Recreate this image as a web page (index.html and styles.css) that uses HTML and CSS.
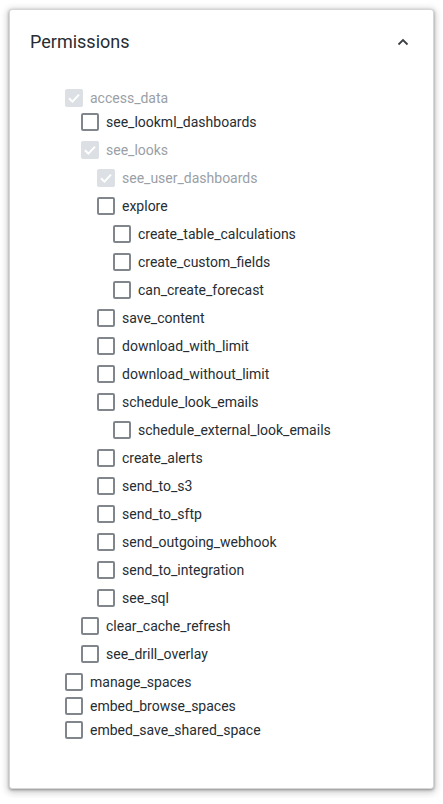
FILE: index.html
```html
<!DOCTYPE html>
<html lang="en">
<head>
    <meta charset="UTF-8">
    <meta name="viewport" content="width=device-width, initial-scale=1.0">
    <title>Permissions</title>
    <link rel="stylesheet" href="styles.css">
</head>
<body>
    <div class="card">
        <div class="card-header">
            <h2>Permissions</h2>
            <svg class="chevron" width="12" height="8" viewBox="0 0 12 8">
                <path d="M1.5 6.5 L6 2 L10.5 6.5" fill="none" stroke="#3c4043" stroke-width="1.8"/>
            </svg>
        </div>

        <ul class="perms">
            <li>
                <div class="perm disabled"><span class="box checked"><svg viewBox="0 0 18 18"><path d="M4 9.2 L7.4 12.6 L14 5.6" fill="none" stroke="#fff" stroke-width="2"/></svg></span>access_data</div>
                <ul>
                    <li><div class="perm"><span class="box"></span>see_lookml_dashboards</div></li>
                    <li>
                        <div class="perm disabled"><span class="box checked"><svg viewBox="0 0 18 18"><path d="M4 9.2 L7.4 12.6 L14 5.6" fill="none" stroke="#fff" stroke-width="2"/></svg></span>see_looks</div>
                        <ul>
                            <li><div class="perm disabled"><span class="box checked"><svg viewBox="0 0 18 18"><path d="M4 9.2 L7.4 12.6 L14 5.6" fill="none" stroke="#fff" stroke-width="2"/></svg></span>see_user_dashboards</div></li>
                            <li>
                                <div class="perm"><span class="box"></span>explore</div>
                                <ul>
                                    <li><div class="perm"><span class="box"></span>create_table_calculations</div></li>
                                    <li><div class="perm"><span class="box"></span>create_custom_fields</div></li>
                                    <li><div class="perm"><span class="box"></span>can_create_forecast</div></li>
                                </ul>
                            </li>
                            <li><div class="perm"><span class="box"></span>save_content</div></li>
                            <li><div class="perm"><span class="box"></span>download_with_limit</div></li>
                            <li><div class="perm"><span class="box"></span>download_without_limit</div></li>
                            <li>
                                <div class="perm"><span class="box"></span>schedule_look_emails</div>
                                <ul>
                                    <li><div class="perm"><span class="box"></span>schedule_external_look_emails</div></li>
                                </ul>
                            </li>
                            <li><div class="perm"><span class="box"></span>create_alerts</div></li>
                            <li><div class="perm"><span class="box"></span>send_to_s3</div></li>
                            <li><div class="perm"><span class="box"></span>send_to_sftp</div></li>
                            <li><div class="perm"><span class="box"></span>send_outgoing_webhook</div></li>
                            <li><div class="perm"><span class="box"></span>send_to_integration</div></li>
                            <li><div class="perm"><span class="box"></span>see_sql</div></li>
                        </ul>
                    </li>
                    <li><div class="perm"><span class="box"></span>clear_cache_refresh</div></li>
                    <li><div class="perm"><span class="box"></span>see_drill_overlay</div></li>
                </ul>
            </li>
            <li><div class="perm"><span class="box"></span>manage_spaces</div></li>
            <li><div class="perm"><span class="box"></span>embed_browse_spaces</div></li>
            <li><div class="perm"><span class="box"></span>embed_save_shared_space</div></li>
        </ul>
    </div>
</body>
</html>
```

FILE: styles.css
```css
body {
    font-family: Roboto, 'Liberation Sans', sans-serif;
    background-color: #ffffff;
    margin: 0;
    padding: 9px;
}
.card {
    background-color: #ffffff;
    border: 1px solid #d6d6d6;
    border-radius: 3px;
    box-shadow: 0 1px 3px rgba(0, 0, 0, 0.35), 0 2px 7px 2px rgba(0, 0, 0, 0.18);
    padding: 19px 20px 46px 20px;
}
.card-header {
    display: flex;
    align-items: center;
    justify-content: space-between;
    padding-right: 4px;
}
.card-header h2 {
    margin: 0;
    font-size: 18px;
    font-weight: 400;
    line-height: 26px;
    color: #262d33;
}
.chevron {
    display: block;
}
ul {
    list-style: none;
    margin: 0;
    padding: 0 0 0 16px;
}
.perms {
    margin: 31px 0 0 35px;
    padding: 0;
}
.perm {
    display: flex;
    align-items: center;
    gap: 7px;
    height: 24px;
    font-size: 14px;
    color: #262d33;
}
/* nested rows sit a little further apart than the top level */
.perms ul .perm {
    margin-bottom: 4px;
}
.box {
    box-sizing: border-box;
    width: 18px;
    height: 18px;
    border: 2px solid #80868b;
    border-radius: 2px;
    flex-shrink: 0;
}
.box svg {
    display: block;
    width: 18px;
    height: 18px;
    margin: -2px;
}
.box.checked {
    border-color: #dcdfe3;
    background-color: #dcdfe3;
}
.disabled {
    color: #9aa0a6;
}
```
